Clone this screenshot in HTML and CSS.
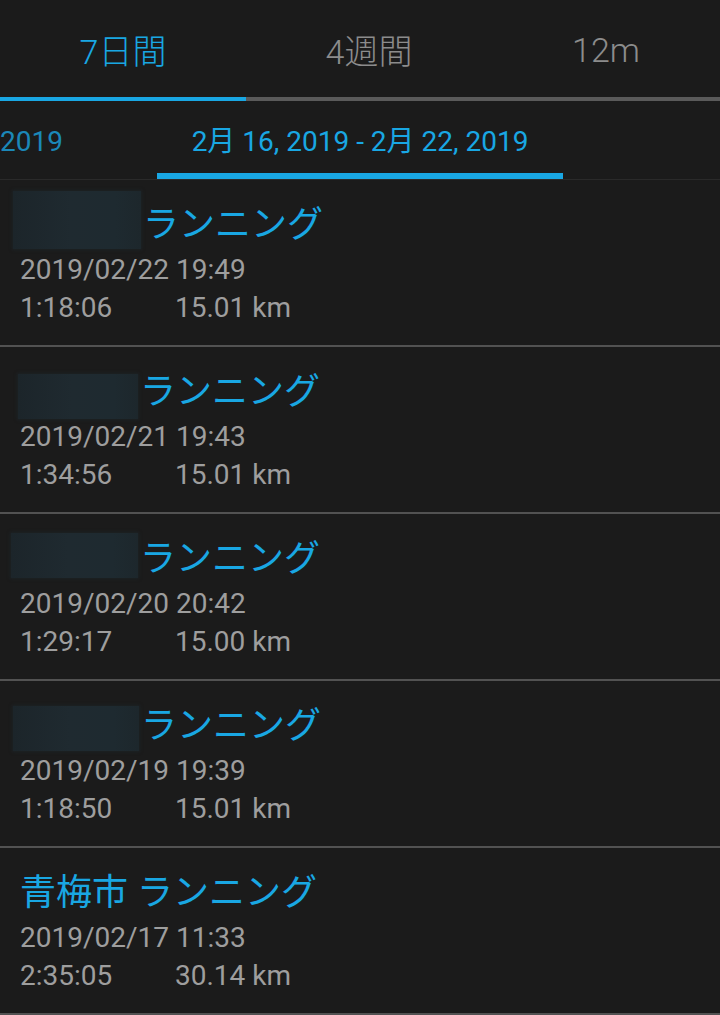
FILE: index.html
```html
<!DOCTYPE html>
<html lang="ja">
<head>
<meta charset="utf-8">
<title>アクティビティ</title>
<link rel="stylesheet" href="styles.css">
</head>
<body>
<div class="app">
  <nav class="tabs">
    <div class="tab active">7日間</div>
    <div class="tab">4週間</div>
    <div class="tab">12m</div>
  </nav>
  <div class="tab-indicator"><div class="tab-indicator-fill"></div></div>

  <div class="weeks">
    <div class="week prev">2019</div>
    <div class="week current">2月 16, 2019 - 2月 22, 2019</div>
    <div class="week next"></div>
  </div>

  <ul class="list">
    <li class="item">
      <div class="title"><span class="blur blur-1"></span>ランニング</div>
      <div class="date">2019/02/22 19:49</div>
      <div class="stats"><span class="time">1:18:06</span><span class="dist">15.01 km</span></div>
    </li>
    <li class="item">
      <div class="title"><span class="blur blur-2"></span>ランニング</div>
      <div class="date">2019/02/21 19:43</div>
      <div class="stats"><span class="time">1:34:56</span><span class="dist">15.01 km</span></div>
    </li>
    <li class="item">
      <div class="title"><span class="blur blur-3"></span>ランニング</div>
      <div class="date">2019/02/20 20:42</div>
      <div class="stats"><span class="time">1:29:17</span><span class="dist">15.00 km</span></div>
    </li>
    <li class="item">
      <div class="title"><span class="blur blur-4"></span>ランニング</div>
      <div class="date">2019/02/19 19:39</div>
      <div class="stats"><span class="time">1:18:50</span><span class="dist">15.01 km</span></div>
    </li>
    <li class="item">
      <div class="title">青梅市 ランニング</div>
      <div class="date">2019/02/17 11:33</div>
      <div class="stats"><span class="time">2:35:05</span><span class="dist">30.14 km</span></div>
    </li>
  </ul>
</div>
</body>
</html>
```

FILE: styles.css
```css
* { box-sizing: border-box; }

html, body {
  margin: 0;
  padding: 0;
  background: #1b1b1b;
}

body {
  width: 720px;
  height: 1015px;
  overflow: hidden;
  font-family: Roboto, "Noto Sans CJK JP", sans-serif;
}

.app {
  display: flex;
  flex-direction: column;
}

.tabs {
  display: grid;
  grid-template-columns: 246px 246px 1fr;
  height: 97px;
  padding-top: 2px;
}

.tab {
  display: flex;
  align-items: center;
  justify-content: center;
  font-size: 34px;
  font-weight: 300;
  color: #8c8c8c;
}

.tab.active {
  color: #19a7e3;
}

.tab-indicator {
  height: 4px;
  background: #5a5a5a;
}

.tab-indicator-fill {
  width: 246px;
  height: 4px;
  background: #19a7e3;
}

.weeks {
  display: grid;
  grid-template-columns: 157px 406px 1fr;
  height: 79px;
  border-bottom: 1px solid #2a2a2a;
}

.week {
  padding-top: 9px;
  line-height: 63px;
  font-size: 28px;
  white-space: nowrap;
  overflow: hidden;
}

.week.prev {
  color: #1b88b8;
  text-align: left;
}

.week.current {
  color: #19a7e3;
  text-align: center;
  border-bottom: 6px solid #19a7e3;
}

.list {
  list-style: none;
  margin: 0;
  padding: 0;
}

.item {
  height: 167px;
  padding: 20px 0 18px 20px;
  border-bottom: 2px solid #525252;
}

.title {
  height: 51px;
  line-height: 51px;
  font-size: 36px;
  color: #19a7e3;
  white-space: nowrap;
}

.blur {
  display: inline-block;
  vertical-align: middle;
  height: 45px;
  margin: -6px 2px -6px 0;
  background: linear-gradient(90deg, #1c252a 0%, #1f2a30 45%, #1e2a30 80%, #1d272c 100%);
  box-shadow: 0 0 3px 1px rgba(30, 40, 45, 0.6);
}

.blur-1 { width: 128px; height: 58px; margin-left: -7px; margin-top: -10px; margin-bottom: -8px; position: relative; top: -6px; }
.blur-2 { width: 120px; margin-left: -2px; position: relative; top: 2px; }
.blur-3 { width: 127px; margin-left: -9px; position: relative; top: -6px; }
.blur-4 { width: 126px; margin-left: -7px; position: relative; top: 0; }

.date {
  height: 38px;
  line-height: 38px;
  font-size: 28px;
  color: #9e9e9e;
}

.stats {
  display: flex;
  height: 38px;
  line-height: 38px;
  font-size: 28px;
  color: #9e9e9e;
}

.time {
  width: 155px;
}
```
